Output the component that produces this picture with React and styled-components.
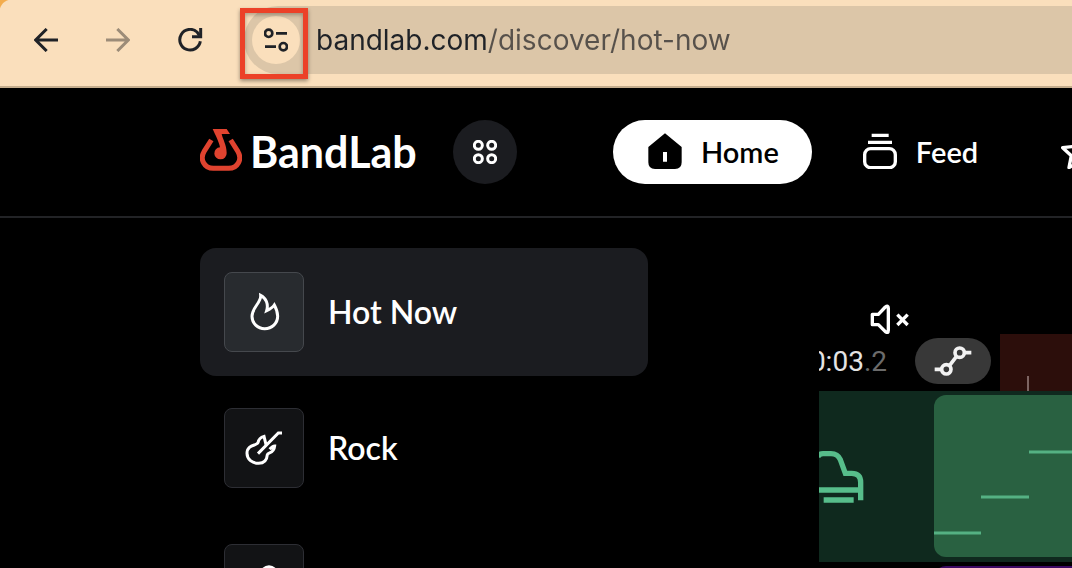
import React, { useState } from 'react';
import styled, { createGlobalStyle } from 'styled-components';

const GlobalStyle = createGlobalStyle`
  * {
    box-sizing: border-box;
  }

  body {
    margin: 0;
    background: #000;
    font-family: Lato, 'Liberation Sans', sans-serif;
    color: #fff;
  }

  button, input {
    font: inherit;
    color: inherit;
    padding: 0;
    border: 0;
    background: none;
  }

  svg {
    display: block;
    flex: none;
  }
`;

const Page = styled.div`
  height: 100vh;
  overflow: hidden;
  display: flex;
  flex-direction: column;
`;

const BrowserBar = styled.div`
  flex: none;
  display: flex;
  padding: 6px 0 12px 34px;
  background: radial-gradient(circle at 12px 12px, #fadfbc 12px, #f3ad4e 13px) 0 0 / 12px 12px no-repeat, #fadfbc;
  border-bottom: 2px solid #c4ad8d;
`;

const BrowserButtons = styled.div`
  display: flex;
  align-items: center;
  gap: 48px;
  margin-right: 40px;
`;

const BrowserButton = styled.button`
  color: #1f2227;

  &:disabled {
    color: #9c8c78;
  }
`;

const AddressBar = styled.div`
  flex: 1;
  min-width: 0;
  height: 68px;
  display: flex;
  align-items: center;
  gap: 16px;
  padding-left: 8px;
  background: #dcc6a8;
  border-radius: 34px 0 0 34px;
`;

const SiteInfo = styled.div`
  position: relative;
`;

const SiteInfoButton = styled.button`
  display: grid;
  place-items: center;
  width: 48px;
  height: 48px;
  border-radius: 50%;
  background: #fadfbc;
  color: #1f2227;
`;

const Highlight = styled.div`
  position: absolute;
  inset: -8px -8px -15px -12px;
  border: 5px solid #ec4128;
  box-shadow: 0 2px 4px rgba(0, 0, 0, 0.4), inset 0 2px 4px rgba(0, 0, 0, 0.3);
  pointer-events: none;
`;

const Url = styled.input`
  flex: 1;
  min-width: 0;
  height: 48px;
  font-family: Inter, 'Liberation Sans', sans-serif;
  font-size: 28px;
  color: #57514b;
  background: linear-gradient(90deg, #1f2227 170px, #57514b 170px);
  background-clip: text;
  -webkit-text-fill-color: transparent;
  outline: none;
`;

const Header = styled.header`
  flex: none;
  display: flex;
  align-items: center;
  height: 130px;
  padding-left: 200px;
  border-bottom: 2px solid #222326;
`;

const Logo = styled.a`
  flex: none;
  display: flex;
  align-items: center;
  gap: 8px;
  width: 219px;
  color: #fff;
  text-decoration: none;
  font-size: 43px;
  line-height: 48px;
  font-weight: 700;

  svg {
    margin-bottom: 4px;
  }
`;

const AppsButton = styled.button`
  flex: none;
  display: grid;
  place-items: center;
  width: 64px;
  height: 64px;
  margin-left: 34px;
  border-radius: 50%;
  background: #1b1c20;
`;

const Nav = styled.nav`
  display: flex;
  gap: 16px;
  margin-left: 96px;
`;

const NavLink = styled.a`
  flex: none;
  display: flex;
  align-items: center;
  gap: 18px;
  height: 64px;
  padding: 0 33px 2px 34px;
  border-radius: 32px;
  font-size: 29px;
  font-weight: 600;
  text-decoration: none;
  background: ${({ $active }) => ($active ? '#fff' : 'transparent')};
  color: ${({ $active }) => ($active ? '#000' : '#fff')};
`;

const Main = styled.main`
  flex: 1;
  min-height: 0;
  display: flex;
  align-items: flex-start;
  padding: 30px 0 0 200px;
`;

const GenreList = styled.div`
  flex: none;
  width: 448px;
  display: flex;
  flex-direction: column;
  gap: 8px;
`;

const Genre = styled.a`
  display: flex;
  align-items: center;
  gap: 24px;
  padding: 24px;
  border-radius: 16px;
  font-size: 32px;
  line-height: 40px;
  font-weight: 600;
  color: #fff;
  text-decoration: none;
  background: ${({ $active }) => ($active ? '#1b1c20' : 'transparent')};
`;

const GenreTile = styled.span`
  display: grid;
  place-items: center;
  width: 80px;
  height: 80px;
  border-radius: 8px;
  border: 1px solid ${({ $active }) => ($active ? '#45484d' : '#2d2e34')};
  background: ${({ $active }) => ($active ? '#282b2f' : '#121315')};
`;

const Preview = styled.section`
  flex: 1;
  min-width: 0;
  margin-left: 171px;
  padding-top: 56px;
  overflow: hidden;
`;

const MuteButton = styled.button`
  display: block;
  margin-left: 51px;
`;

const Transport = styled.div`
  display: flex;
  height: 57px;
`;

const Time = styled.div`
  width: 96px;
  display: flex;
  justify-content: flex-end;
  padding-right: 28px;
  font-family: Roboto, 'Liberation Sans', sans-serif;
  font-size: 28px;
  line-height: 56px;
  color: #e4e4e4;

  span {
    color: #6b6b6b;
  }
`;

const AutomationButton = styled.button`
  flex: none;
  display: grid;
  place-items: center;
  width: 76px;
  height: 46px;
  margin: 4px 9px 0 0;
  border-radius: 23px;
  background: #383838;
  color: #f2f2f2;
`;

const Ruler = styled.div`
  flex: 1;
  display: flex;
  align-items: flex-end;
  padding-left: 27px;
  background: #2c0e0b;
`;

const RulerMark = styled.span`
  width: 2px;
  height: 15px;
  background: #7d6462;
`;

const Track = styled.div`
  display: flex;
  height: 171px;
  padding: 4px 0 5px;
  background: #0f291e;
`;

const TrackIcon = styled.div`
  flex: none;
  width: 115px;
  padding-top: 56px;
  color: #57bd8b;
`;

const Region = styled.div`
  flex: 1;
  min-width: 0;
  border-radius: 12px 0 0 12px;
  background: #296141;
  overflow: hidden;
`;

const NextRegion = styled.div`
  height: 12px;
  margin: 4px 0 0 115px;
  border-radius: 12px 0 0 0;
  background: #3c0a63;
`;

const ArrowIcon = ({ flip }) => (
  <svg width="24" height="24" viewBox="0 0 72 72" fill="none" stroke="currentColor" strokeWidth="9">
    <path d={flip ? 'M0 36H66M34 3L67 36L34 69' : 'M72 36H6M38 3L5 36L38 69'} />
  </svg>
);

const ReloadIcon = () => (
  <svg width="26" height="24" viewBox="0 0 78 72" fill="none" stroke="currentColor" strokeWidth="9">
    <path d="M67 40A31 31 0 1 1 57 12L64 22" />
    <path d="M68 0V26H42" strokeWidth="9" />
  </svg>
);

const TuneIcon = () => (
  <svg width="24" height="24" viewBox="0 0 72 72" fill="none" stroke="currentColor" strokeWidth="8">
    <circle cx="14" cy="16" r="11" />
    <path d="M36 16H69M3 56H36" />
    <circle cx="58" cy="56" r="11" />
  </svg>
);

const LogoIcon = () => (
  <svg width="42" height="42" viewBox="0 0 126 126">
    <path
      d="M34 33L12 68C-1 90 12 118 40 118H86C114 118 127 90 114 68L92 33"
      fill="none"
      stroke="#e0432f"
      strokeWidth="15"
    />
    <path
      d="M38 0H80L90 15H65C68 30 80 48 80 72A18 18 0 0 1 62 91A18 18 0 1 1 60 55C58 40 46 18 38 0Z"
      fill="#e0432f"
    />
  </svg>
);

const AppsIcon = () => (
  <svg width="24" height="24" viewBox="0 0 72 72" fill="none" stroke="currentColor" strokeWidth="9">
    <circle cx="16" cy="16" r="12" />
    <circle cx="56" cy="16" r="12" />
    <circle cx="16" cy="56" r="12" />
    <circle cx="56" cy="56" r="12" />
  </svg>
);

const HomeIcon = () => (
  <svg width="36" height="36" viewBox="0 0 108 108" fill="currentColor">
    <path
      fillRule="evenodd"
      d="M54 1L104 42V88Q104 108 84 108H24Q4 108 4 88V42ZM48 57V86H60V57Z"
    />
  </svg>
);

const FeedIcon = () => (
  <svg width="36" height="36" viewBox="0 0 108 108" fill="none" stroke="currentColor" strokeWidth="10">
    <path d="M29 7H80M18 28H90" />
    <rect x="8" y="47" width="92" height="57" rx="18" />
  </svg>
);

const StarIcon = () => (
  <svg width="36" height="36" viewBox="0 0 108 108" fill="none" stroke="currentColor" strokeWidth="10" strokeLinejoin="round">
    <path d="M54 8L68 40L103 44L77 68L84 104L54 86L24 104L31 68L5 44L40 40Z" />
  </svg>
);

const FlameIcon = () => (
  <svg width="40" height="40" viewBox="0 0 120 120" fill="none" stroke="currentColor" strokeWidth="9">
    <path d="M50 10C52 32 24 46 24 73C24 94 41 110 62 110C84 110 101 94 101 73C101 60 97 50 91 39C86 47 76 52 68 56C74 36 66 18 50 10Z" />
  </svg>
);

const GuitarIcon = () => (
  <svg width="40" height="40" viewBox="0 0 120 120" fill="none" stroke="currentColor" strokeWidth="9">
    <path d="M114 15H103L42 77" />
    <path d="M66 50L60 25C48 28 44 33 42 44C39 54 9 48 9 76C9 94 25 106 44 106C64 106 69 93 70 80C72 72 90 78 92 54C87 54 82 58 77 64" />
  </svg>
);

const MicIcon = () => (
  <svg width="40" height="40" viewBox="0 0 120 120" fill="none" stroke="currentColor" strokeWidth="9">
    <circle cx="75" cy="30" r="22" />
    <path d="M56 42L18 96L27 105L82 62" />
  </svg>
);

const MuteIcon = () => (
  <svg width="42" height="30" viewBox="0 0 126 90" fill="none" stroke="currentColor" strokeWidth="10" strokeLinejoin="round">
    <path d="M7 31H25L46 9Q55 2 55 13V79Q55 90 46 83L25 62H7Z" />
    <path d="M82 32L113 63M113 32L82 63" />
  </svg>
);

const AutomationIcon = () => (
  <svg width="38" height="30" viewBox="0 0 114 90" fill="none" stroke="currentColor" strokeWidth="11">
    <circle cx="77" cy="20" r="14" />
    <circle cx="37" cy="70" r="14" />
    <path d="M92 20H112M2 70H22M47 58L67 32" />
  </svg>
);

const PianoIcon = () => (
  <svg width="46" height="54" viewBox="0 0 138 162" fill="none" stroke="currentColor" strokeWidth="16">
    <path d="M-4 18Q0 8 12 8H36Q56 8 64 26L79 67H98Q125 67 125 94V148" />
    <path d="M-4 117H124M14 147H104" />
  </svg>
);

const NotesPattern = () => (
  <svg width="300" height="162" viewBox="0 0 300 162" stroke="#55b183" strokeWidth="3">
    <path d="M0 138H47M47 102H95M95 57H300" />
  </svg>
);

const genres = [
  { name: 'Hot Now', icon: FlameIcon },
  { name: 'Rock', icon: GuitarIcon },
  { name: '', icon: MicIcon },
];

const App = () => {
  const [url, setUrl] = useState('bandlab.com/discover/hot-now');
  const [selected, setSelected] = useState(0);

  return (
    <Page>
      <GlobalStyle />
      <BrowserBar>
        <BrowserButtons>
          <BrowserButton aria-label="Back">
            <ArrowIcon />
          </BrowserButton>
          <BrowserButton aria-label="Forward" disabled>
            <ArrowIcon flip />
          </BrowserButton>
          <BrowserButton aria-label="Reload">
            <ReloadIcon />
          </BrowserButton>
        </BrowserButtons>
        <AddressBar>
          <SiteInfo>
            <SiteInfoButton aria-label="View site information">
              <TuneIcon />
            </SiteInfoButton>
            <Highlight />
          </SiteInfo>
          <Url
            aria-label="Address"
            spellCheck={false}
            value={url}
            onChange={(e) => setUrl(e.target.value)}
          />
        </AddressBar>
      </BrowserBar>

      <Header>
        <Logo href="#">
          <LogoIcon />
          BandLab
        </Logo>
        <AppsButton aria-label="Apps">
          <AppsIcon />
        </AppsButton>
        <Nav>
          <NavLink href="#home" $active>
            <HomeIcon />
            Home
          </NavLink>
          <NavLink href="#feed">
            <FeedIcon />
            Feed
          </NavLink>
          <NavLink href="#explore" aria-label="Explore">
            <StarIcon />
          </NavLink>
        </Nav>
      </Header>

      <Main>
        <GenreList>
          {genres.map(({ name, icon: Icon }, index) => (
            <Genre
              key={index}
              href="#genre"
              aria-label={name || 'Genre'}
              $active={index === selected}
              onClick={() => setSelected(index)}
            >
              <GenreTile $active={index === selected}>
                <Icon />
              </GenreTile>
              {name}
            </Genre>
          ))}
        </GenreList>

        <Preview>
          <MuteButton aria-label="Unmute">
            <MuteIcon />
          </MuteButton>
          <Transport>
            <Time>
              0:03<span>.2</span>
            </Time>
            <AutomationButton aria-label="Automation">
              <AutomationIcon />
            </AutomationButton>
            <Ruler>
              <RulerMark />
            </Ruler>
          </Transport>
          <Track>
            <TrackIcon>
              <PianoIcon />
            </TrackIcon>
            <Region>
              <NotesPattern />
            </Region>
          </Track>
          <NextRegion />
        </Preview>
      </Main>
    </Page>
  );
};

export default App;
